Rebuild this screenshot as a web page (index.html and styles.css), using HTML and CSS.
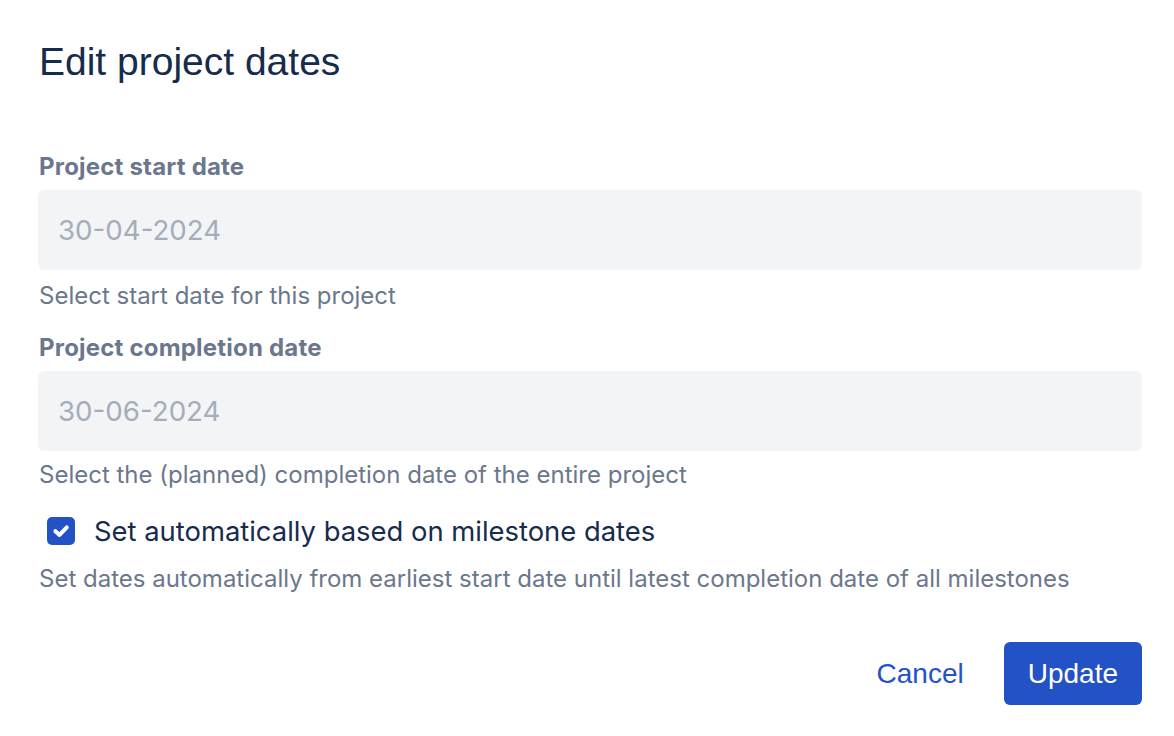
FILE: index.html
```html
<!DOCTYPE html>
<html lang="en">
<head>
<meta charset="utf-8">
<title>Edit project dates</title>
<link rel="stylesheet" href="styles.css">
</head>
<body>
<div class="dialog">
  <h1 class="title">Edit project dates</h1>
  <div class="form">
    <div class="field">
      <label class="label">Project start date</label>
      <div class="input">30-04-2024</div>
      <div class="helper">Select start date for this project</div>
    </div>
    <div class="field field-second">
      <label class="label">Project completion date</label>
      <div class="input">30-06-2024</div>
      <div class="helper">Select the (planned) completion date of the entire project</div>
    </div>
    <div class="check-row">
      <span class="checkbox">
        <svg width="28" height="28" viewBox="0 0 28 28"><path d="M8.4 14.2 L12.5 17.9 L19.8 10.4" fill="none" stroke="#fff" stroke-width="4" stroke-linecap="round" stroke-linejoin="round"/></svg>
      </span>
      <span class="check-label">Set automatically based on milestone dates</span>
    </div>
    <div class="helper desc">Set dates automatically from earliest start date until latest completion date of all milestones</div>
  </div>
  <div class="footer">
    <button class="btn btn-link">Cancel</button>
    <button class="btn btn-primary">Update</button>
  </div>
</div>
</body>
</html>
```
FILE: styles.css
```css
html, body {
  margin: 0;
  padding: 0;
  background: #ffffff;
}
.dialog {
  width: 1174px;
  height: 736px;
  box-sizing: border-box;
  padding: 38px 32px 0 38px;
  font-family: "Inter", "Liberation Sans", sans-serif;
}
.title {
  margin: 0;
  font-family: "Liberation Sans", Arial, sans-serif;
  font-weight: 400;
  font-size: 39px;
  line-height: 48px;
  color: #172b4d;
  padding-left: 1px;
}
.form {
  margin-top: 65px;
  display: flex;
  flex-direction: column;
}
.field {
  display: flex;
  flex-direction: column;
}
.field-second {
  margin-top: 20px;
}
.label {
  font-size: 24px;
  line-height: 32px;
  font-weight: 700;
  color: #6b778c;
  padding-left: 1px;
  letter-spacing: 0.2px;
}
.input {
  margin-top: 7px;
  height: 80px;
  box-sizing: border-box;
  background: #f3f4f6;
  border-radius: 6px;
  display: flex;
  align-items: center;
  padding-left: 20px;
  font-size: 27.7px;
  color: #a5adba;
}
.helper {
  margin-top: 10px;
  font-size: 24px;
  line-height: 32px;
  color: #6b778c;
  padding-left: 1px;
}
.field-second .helper {
  margin-top: 8px;
}
.check-row {
  margin-top: 20px;
  height: 40px;
  display: flex;
  align-items: center;
  padding-left: 9px;
}
.checkbox {
  width: 28px;
  height: 28px;
  border-radius: 5px;
  background: #2352c7;
  display: flex;
  flex: none;
}
.check-label {
  margin-left: 19px;
  font-size: 27.4px;
  color: #172b4d;
}
.desc {
  margin-top: 12px;
}
.footer {
  margin-top: 47px;
  display: flex;
  justify-content: flex-end;
  gap: 16px;
}
.btn {
  font-family: "Liberation Sans", Arial, sans-serif;
  font-size: 28px;
  height: 63px;
  padding: 0 24px;
  border: none;
  border-radius: 6px;
  cursor: pointer;
}
.btn-link {
  background: transparent;
  color: #2352c7;
}
.btn-primary {
  background: #2352c7;
  color: #ffffff;
}
```
